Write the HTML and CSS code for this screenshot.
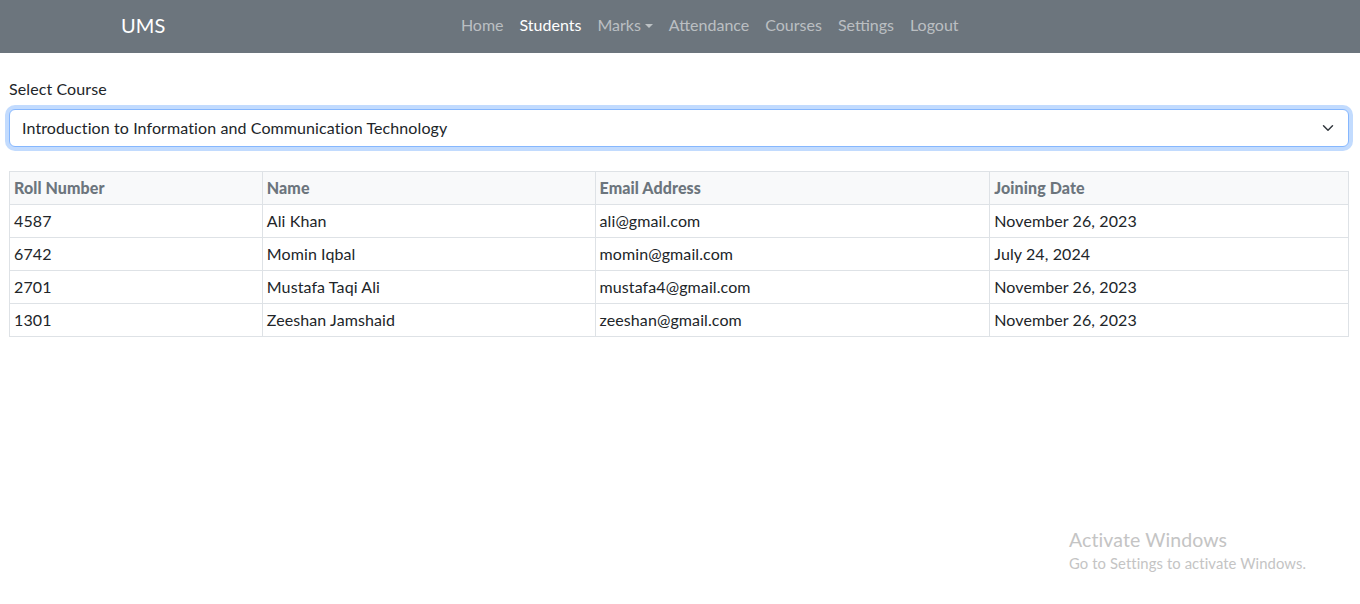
FILE: index.html
```html
<!DOCTYPE html>
<html lang="en">
<head>
<meta charset="utf-8">
<title>UMS - Students</title>
<link rel="stylesheet" href="styles.css">
</head>
<body>
<nav class="navbar">
  <div class="nav-container">
    <a class="brand" href="#">UMS</a>
    <ul class="nav-links">
      <li><a href="#">Home</a></li>
      <li><a class="active" href="#">Students</a></li>
      <li><a class="dropdown" href="#">Marks</a></li>
      <li><a href="#">Attendance</a></li>
      <li><a href="#">Courses</a></li>
      <li><a href="#">Settings</a></li>
      <li><a href="#">Logout</a></li>
    </ul>
  </div>
</nav>
<main class="content">
  <label class="form-label" for="course">Select Course</label>
  <div class="select-wrap">
    <select id="course" class="form-select">
      <option>Introduction to Information and Communication Technology</option>
    </select>
  </div>
  <table class="students">
    <thead>
      <tr><th class="c1">Roll Number</th><th class="c2">Name</th><th class="c3">Email Address</th><th class="c4">Joining Date</th></tr>
    </thead>
    <tbody>
      <tr><td>4587</td><td>Ali Khan</td><td>ali@gmail.com</td><td>November 26, 2023</td></tr>
      <tr><td>6742</td><td>Momin Iqbal</td><td>momin@gmail.com</td><td>July 24, 2024</td></tr>
      <tr><td>2701</td><td>Mustafa Taqi Ali</td><td>mustafa4@gmail.com</td><td>November 26, 2023</td></tr>
      <tr><td>1301</td><td>Zeeshan Jamshaid</td><td>zeeshan@gmail.com</td><td>November 26, 2023</td></tr>
    </tbody>
  </table>
</main>
<div class="watermark">
  <div class="wm-title">Activate Windows</div>
  <div class="wm-sub">Go to Settings to activate Windows.</div>
</div>
</body>
</html>
```
FILE: styles.css
```css
* { box-sizing: border-box; }
html, body { margin: 0; padding: 0; }
body {
  font-family: Lato, "Liberation Sans", sans-serif;
  font-size: 16px;
  line-height: 24px;
  letter-spacing: 0.1px;
  color: #212529;
  background: #fff;
  height: 604px;
  overflow: hidden;
  position: relative;
}
.navbar {
  background: #6c757d;
  height: 53px;
}
.nav-container {
  width: 1140px;
  margin: 0 auto;
  padding: 0 12px 3px 11px;
  height: 53px;
  display: flex;
  align-items: center;
}
.brand {
  color: #fff;
  text-decoration: none;
  font-size: 20px;
  line-height: 30px;
  margin-right: 16px;
}
.nav-links {
  list-style: none;
  margin: 0 auto;
  padding: 0;
  display: flex;
  letter-spacing: 0;
}
.nav-links a {
  display: block;
  padding: 8px;
  color: rgba(255,255,255,0.55);
  text-decoration: none;
}
.nav-links a.active { color: #fff; }
.nav-links a.dropdown::after {
  content: "";
  display: inline-block;
  margin-left: 4px;
  vertical-align: 3px;
  border-top: 4.8px solid;
  border-right: 4.8px solid transparent;
  border-left: 4.8px solid transparent;
}
.content {
  margin: 24px 11px 0 9px;
}
.form-label {
  display: block;
  margin-bottom: 8px;
}
.select-wrap { margin-bottom: 24px; }
.form-select {
  display: block;
  width: 100%;
  height: 38px;
  padding: 6px 36px 6px 12px;
  font: inherit;
  letter-spacing: inherit;
  color: #212529;
  background-color: #fff;
  background-image: url("data:image/svg+xml,%3csvg xmlns='http://www.w3.org/2000/svg' viewBox='0 0 16 16'%3e%3cpath fill='none' stroke='%23343a40' stroke-linecap='round' stroke-linejoin='round' stroke-width='2' d='m2 5 6 6 6-6'/%3e%3c/svg%3e");
  background-repeat: no-repeat;
  background-position: right 12px center;
  background-size: 16px 12px;
  border: 1px solid #86b7fe;
  border-radius: 6px;
  box-shadow: 0 0 0 4px rgba(13,110,253,0.25);
  appearance: none;
  outline: none;
}
.students {
  width: 100%;
  border-collapse: collapse;
  border: 1px solid #dee2e6;
}
.students th, .students td {
  border: 1px solid #dee2e6;
  padding: 4px;
  text-align: left;
  vertical-align: top;
}
.students th {
  background: #f8f9fa;
  color: #6c757d;
  font-weight: 900;
}
.c1 { width: 253px; }
.c2 { width: 333px; }
.c3 { width: 395px; }
.c4 { width: 359px; }
.watermark {
  position: absolute;
  left: 1069px;
  top: 527px;
  color: #c4c4c4;
}
.wm-title { font-size: 19.5px; line-height: 26px; }
.wm-sub { font-size: 14.8px; line-height: 20px; }
```
